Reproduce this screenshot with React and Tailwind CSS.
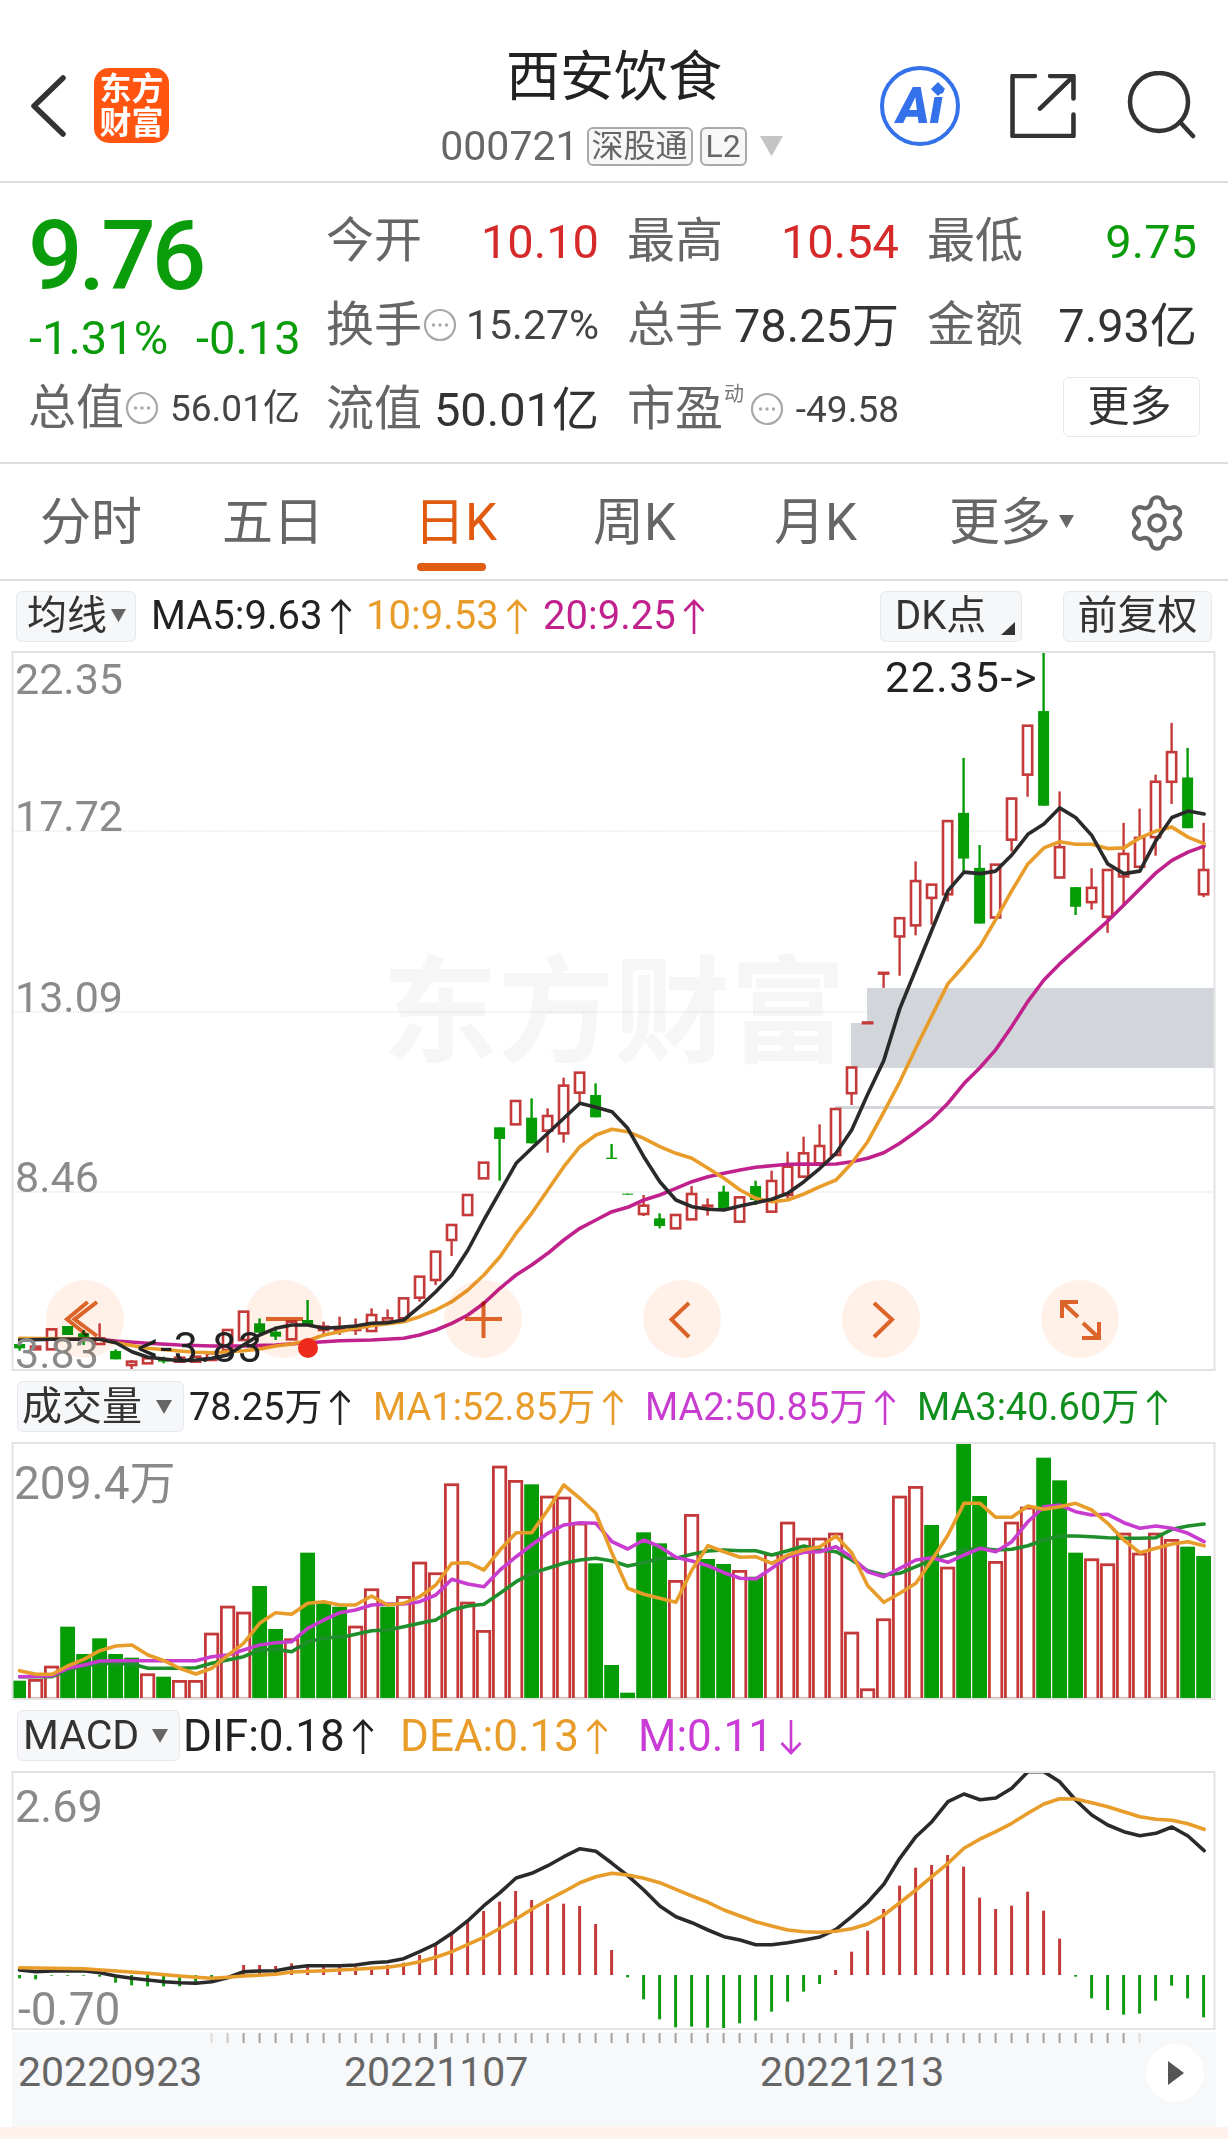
import React from 'react';
import { Settings } from 'lucide-react';

const RED = '#c43a3a';
const GREEN = '#069c06';
const BLACK = '#2a2a2a';
const ORANGE = '#e89c2a';
const MAGENTA = '#c0218c';
const VIOLET = '#c83cd0';
const DEEP_GREEN = '#1f8f2b';

const X = (i) => 19.6 + 16 * i;
// points were read off zoomed crops: x0/y0 is the crop origin, sy the vertical zoom
const seg = (x0, y0, sy, pts) => pts.map(([x, y]) => [x0 + x / 2.554, y0 + y / sy]);
const toPoints = (pts) => pts.map(([x, y]) => `${x.toFixed(1)},${y.toFixed(1)}`).join(' ');

// [i, colour, top, bottom, high, low]
const candleRows = (y0, sy, rows) =>
  rows.map(([i, c, t, b, h = t, l = b]) => ({ i, c, t: y0 + t / sy, b: y0 + b / sy, h: y0 + h / sy, l: y0 + l / sy }));

const candles = [
  ...candleRows(1020, 3, [
    [0, 'g', 972, 985, 965, 992], [1, 'r', 980, 988], [2, 'r', 928, 988], [3, 'g', 918, 945], [4, 'g', 940, 955, 930, 975],
    [5, 'r', 955, 972, 910, 975], [6, 'g', 993, 1018, 988], [7, 'r', 1025, 1035, 1020, 1052], [8, 'r', 1015, 1030], [9, 'g', 1015, 1025, 1010, 1030],
    [10, 'r', 1013, 1025], [11, 'r', 1010, 1025], [12, 'r', 1000, 1020], [13, 'r', 930, 990], [14, 'r', 875, 960],
    [15, 'g', 910, 938, 895], [16, 'g', 935, 950, 920, 960], [17, 'r', 905, 958], [18, 'g', 900, 915, 840], [19, 'r', 920, 930, 905, 950],
    [20, 'r', 925, 931, 890, 945], [21, 'r', 925, 930, 895, 945], [22, 'r', 885, 933, 865], [23, 'r', 895, 905, 868], [24, 'r', 835, 895],
    [25, 'r', 770, 833, 770, 845], [26, 'r', 695, 780, 695, 795], [27, 'r', 615, 660, 615, 708], [28, 'r', 525, 585], [29, 'r', 428, 475],
    [30, 'g', 322, 357, 322, 482], [31, 'r', 243, 313], [32, 'g', 293, 370, 235], [33, 'r', 288, 332, 265, 398], [34, 'r', 197, 340, 173, 368],
    [35, 'r', 158, 218, 158, 250], [36, 'g', 225, 292, 190], [37, 'g', 413, 417, 372],
  ]),
  ...candleRows(1120, 3, [
    [38, 'g', 221, 224], [39, 'r', 257, 282, 225, 288], [40, 'g', 295, 318, 280, 325], [41, 'r', 285, 325], [42, 'r', 222, 298, 198],
    [43, 'r', 257, 259, 235, 287], [44, 'g', 215, 268, 197], [45, 'r', 232, 305], [46, 'g', 198, 240, 182, 255], [47, 'r', 183, 275, 152],
    [48, 'r', 140, 225, 95, 235], [49, 'r', 100, 170, 50], [50, 'r', 78, 130, 13], [51, 'r', -33, 105],
  ]),
  ...candleRows(580, 2.8, [
    [52, 'r', 1365, 1437, 1365, 1470], [53, 'r', 1239, 1241], [54, 'r', 1100, 1102, 1100, 1142], [55, 'r', 947, 998, 947, 1108],
    [56, 'r', 843, 967, 788, 995], [57, 'r', 853, 890, 853, 965], [58, 'r', 675, 880, 675, 900], [59, 'g', 652, 780, 498, 820],
    [60, 'g', 806, 962, 742], [61, 'r', 797, 945], [62, 'r', 612, 727, 612, 760], [63, 'r', 408, 545, 408, 607], [64, 'g', 367, 632, 198],
    [65, 'r', 748, 833, 592], [66, 'g', 860, 915, 860, 938], [67, 'r', 862, 902, 807, 923], [68, 'r', 812, 943, 812, 988], [69, 'r', 767, 830, 680, 908],
    [70, 'r', 722, 803, 640], [71, 'r', 565, 720, 545, 772], [72, 'r', 482, 565, 400, 627], [73, 'g', 553, 695, 470], [74, 'r', 812, 880, 680, 888],
  ]),
];

const ma5 = [
  ...seg(0, 1020, 3, [[50, 960], [133, 958], [255, 958], [296, 968], [337, 995], [378, 1012], [459, 1022], [500, 1020], [541, 1015], [581, 1005], [622, 975], [663, 945], [704, 925], [745, 915], [786, 915], [827, 925], [868, 922], [908, 918], [949, 910], [990, 908], [1031, 900], [1072, 860], [1113, 815], [1154, 765], [1195, 690], [1236, 600], [1277, 515], [1318, 430], [1358, 385], [1399, 340], [1440, 295], [1481, 250], [1522, 262], [1563, 275]]),
  ...seg(614, 1120, 3, [[35, 25], [76, 110], [117, 185], [158, 240], [199, 260], [240, 268], [281, 270], [322, 258], [362, 248], [403, 238], [444, 220], [485, 185], [526, 145], [567, 100], [607, 30]]),
  ...seg(614, 580, 2.8, [[648, 1440], [689, 1345], [730, 1200], [771, 1090], [812, 980], [853, 870], [894, 818], [935, 822], [975, 815], [1016, 770], [1057, 712], [1098, 683], [1138, 638], [1179, 665], [1220, 715], [1261, 795], [1302, 822], [1343, 815], [1384, 730], [1425, 665], [1466, 647], [1507, 655]]),
];
const ma10 = [
  ...seg(0, 1020, 3, [[50, 955], [255, 958], [296, 968], [378, 985], [459, 993], [500, 997], [541, 998], [622, 992], [663, 987], [704, 978], [745, 972], [786, 962], [827, 945], [868, 935], [908, 925], [949, 917], [1031, 905], [1072, 890], [1113, 870], [1154, 845], [1195, 810], [1236, 765], [1277, 710], [1318, 640], [1358, 580], [1399, 510], [1440, 440], [1481, 380], [1522, 345], [1563, 328]]),
  ...seg(614, 1120, 3, [[35, 35], [76, 55], [117, 80], [158, 100], [199, 115], [240, 145], [281, 175], [322, 210], [362, 235], [403, 245], [444, 240], [485, 222], [526, 200], [567, 180], [607, 130], [648, 65]]),
  ...seg(614, 580, 2.8, [[689, 1490], [730, 1405], [771, 1310], [812, 1220], [853, 1130], [894, 1080], [935, 1025], [975, 950], [1016, 870], [1057, 795], [1098, 750], [1138, 733], [1179, 740], [1220, 740], [1261, 752], [1302, 750], [1343, 722], [1384, 703], [1425, 692], [1466, 720], [1507, 738]]),
];
const ma20 = [
  ...seg(0, 1020, 3, [[50, 957], [255, 958], [296, 963], [378, 970], [459, 975], [541, 978], [622, 978], [704, 975], [786, 968], [868, 962], [949, 960], [1031, 955], [1072, 945], [1113, 930], [1154, 910], [1195, 885], [1236, 850], [1277, 805], [1318, 765], [1358, 735], [1399, 700], [1440, 660], [1481, 625], [1522, 600], [1563, 575]]),
  ...seg(614, 1120, 3, [[35, 262], [76, 240], [117, 225], [158, 205], [199, 185], [240, 170], [281, 160], [322, 150], [362, 142], [403, 137], [444, 133], [485, 132], [526, 133], [567, 132], [607, 125], [648, 115], [689, 98], [730, 70], [771, 35]]),
  ...seg(614, 580, 2.8, [[812, 1510], [853, 1465], [894, 1410], [935, 1365], [975, 1315], [1016, 1250], [1057, 1180], [1098, 1120], [1138, 1075], [1179, 1035], [1220, 995], [1261, 955], [1302, 910], [1343, 865], [1384, 820], [1425, 785], [1466, 762], [1507, 745]]),
];

const volColors = 'grrgggggrgrrrrrggrgggrrgrrrrrrrrgrrrgg' + 'gggrrggrgrrrrrrrrrrgrggrrrgggrrrrrrgg';
const volTops = [
  ...[1322, 1317, 1277, 1160, 1242, 1195, 1242, 1253, 1300, 1310, 1320, 1320, 1178, 1097, 1115, 1038, 1167, 1195, 938, 1085, 1100, 1157, 1045, 1100, 1068, 965, 997, 730, 1085, 1170, 677, 720, 733, 767, 770, 848, 970, 1275].map((z) => 1240 + z / 3),
  ...[878, 397, 430, 540, 342, 477, 492, 510, 530, 460, 365, 413, 413, 398, 695, 865, 655, 287, 258, 375, 500, 127, 288, 483, 365, 320, 173, 241, 458, 475, 490, 398, 458, 398, 417, 440, 468].map((z) => 1400 + z / 3),
];

const volMa1 = [
  ...seg(0, 1240, 3, [[50, 1292], [92, 1303], [133, 1303], [173, 1278], [214, 1258], [255, 1232], [296, 1218], [337, 1215], [378, 1245], [419, 1262], [459, 1285], [500, 1302], [541, 1285], [581, 1247], [622, 1210], [663, 1150], [704, 1118], [745, 1123], [786, 1090], [827, 1085], [868, 1095], [908, 1095], [949, 1068], [990, 1095], [1031, 1090], [1072, 1070], [1113, 1035], [1154, 970], [1195, 968], [1236, 990], [1277, 930], [1318, 878], [1358, 878], [1399, 810], [1440, 735], [1481, 775], [1522, 820]]),
  ...seg(614, 1400, 3, [[-5, 460], [35, 565], [76, 583], [117, 595], [158, 607], [199, 510], [240, 437], [281, 455], [322, 472], [362, 470], [403, 490], [444, 465], [485, 450], [526, 440], [567, 408], [607, 458], [648, 557], [689, 607], [730, 580], [771, 550], [812, 480], [853, 405], [894, 310], [935, 310], [975, 352], [1016, 352], [1057, 318], [1098, 328], [1138, 320], [1179, 310], [1220, 330], [1261, 370], [1302, 420], [1343, 458], [1384, 445], [1425, 432], [1466, 425], [1507, 437]]),
];
const volMa2 = [
  ...seg(0, 1240, 3, [[50, 1310], [133, 1307], [173, 1285], [214, 1275], [255, 1263], [296, 1262], [500, 1262], [541, 1250], [581, 1245], [622, 1230], [663, 1215], [704, 1208], [745, 1205], [786, 1165], [827, 1140], [868, 1118], [908, 1110], [949, 1095], [990, 1092], [1031, 1092], [1072, 1085], [1113, 1065], [1154, 1018], [1195, 1032], [1236, 1040], [1277, 990], [1318, 950], [1358, 915], [1399, 880], [1440, 855], [1481, 848], [1522, 850]]),
  ...seg(614, 1400, 3, [[-5, 425], [35, 447], [76, 420], [117, 440], [158, 472], [199, 483], [240, 497], [281, 518], [322, 535], [362, 537], [403, 505], [444, 470], [485, 457], [526, 455], [567, 440], [607, 472], [648, 515], [689, 530], [730, 505], [771, 480], [812, 473], [853, 487], [894, 465], [935, 445], [975, 455], [1016, 425], [1057, 365], [1098, 320], [1138, 315], [1179, 335], [1220, 345], [1261, 343], [1302, 368], [1343, 385], [1384, 378], [1425, 385], [1466, 400], [1507, 425]]),
];
const volMa3 = [
  ...seg(0, 1240, 3, [[50, 1310], [133, 1310], [173, 1290], [214, 1278], [255, 1270], [337, 1272], [378, 1285], [459, 1285], [500, 1283], [541, 1270], [581, 1260], [622, 1250], [663, 1230], [704, 1228], [745, 1235], [786, 1205], [827, 1195], [888, 1188], [949, 1172], [990, 1170], [1031, 1160], [1072, 1150], [1113, 1140], [1154, 1110], [1195, 1098], [1236, 1093], [1277, 1060], [1318, 1025], [1358, 1000], [1399, 985], [1440, 970], [1481, 960], [1522, 955]]),
  ...seg(614, 1400, 3, [[-5, 483], [35, 498], [76, 488], [117, 475], [158, 475], [199, 463], [240, 453], [281, 450], [322, 452], [362, 452], [403, 465], [444, 452], [485, 438], [526, 450], [567, 455], [607, 480], [648, 512], [689, 525], [730, 520], [771, 500], [812, 480], [853, 465], [894, 450], [935, 445], [975, 450], [1016, 448], [1057, 437], [1098, 420], [1138, 408], [1179, 408], [1220, 410], [1261, 413], [1302, 415], [1343, 415], [1384, 413], [1425, 388], [1466, 378], [1507, 372]]),
];

// end of each MACD bar, zero line at 825 in crop coordinates
const macdEnds = [835, 838, 827, 827, 827, 830, 848, 856, 859, 859, 859, 855, 845, 825, 795, 795, 798, 790, 793, 795, 798, 800, 800, 795, 788, 765, 733, 703, 665, 633, 605, 573, 600, 611, 611, 618, 672, 750, 832, 898, 958, 982, 980, 983, 985, 970, 962, 935, 905, 875, 852, 810, 755, 692, 627, 557, 503, 495, 465, 500, 593, 627, 617, 575, 632, 716, 830, 895, 930, 944, 941, 902, 857, 895, 952];

const dif = [
  ...seg(0, 1700, 3, [[50, 810], [92, 815], [133, 813], [214, 812], [255, 818], [296, 828], [337, 835], [378, 840], [419, 845], [459, 848], [500, 850], [541, 845], [581, 833], [622, 815], [663, 813], [704, 812], [745, 803], [786, 797], [868, 797], [908, 795], [949, 788], [990, 785], [1031, 776], [1072, 755], [1113, 732], [1154, 700], [1195, 662], [1236, 617], [1277, 578], [1318, 534], [1358, 520], [1399, 497], [1440, 470], [1481, 446], [1522, 454], [1563, 490]]),
  ...seg(614, 1700, 3, [[35, 527], [76, 570], [117, 618], [158, 650], [199, 668], [240, 690], [281, 710], [322, 720], [362, 734], [403, 734], [444, 728], [485, 720], [526, 711], [567, 688], [607, 650], [648, 607], [689, 553], [730, 475], [771, 410], [812, 365], [853, 305], [894, 282], [935, 299], [975, 294], [1016, 265], [1057, 215], [1098, 215], [1138, 245], [1179, 300], [1220, 345], [1261, 375], [1302, 395], [1343, 407], [1384, 400], [1425, 381], [1466, 408], [1507, 452]]),
];
const dea = [
  ...seg(0, 1700, 3, [[50, 803], [133, 805], [214, 806], [296, 813], [378, 820], [459, 828], [500, 832], [541, 835], [581, 832], [622, 828], [704, 823], [745, 816], [827, 812], [908, 808], [990, 802], [1031, 795], [1072, 785], [1113, 772], [1154, 755], [1195, 733], [1236, 712], [1277, 685], [1318, 657], [1358, 628], [1399, 600], [1440, 575], [1481, 548], [1522, 530], [1563, 520]]),
  ...seg(614, 1700, 3, [[35, 525], [76, 535], [117, 548], [158, 568], [199, 588], [240, 607], [281, 630], [322, 648], [362, 665], [403, 678], [444, 690], [485, 695], [526, 697], [567, 694], [607, 686], [648, 672], [689, 645], [730, 608], [771, 570], [812, 530], [853, 490], [894, 445], [935, 417], [975, 395], [1016, 370], [1057, 340], [1098, 312], [1138, 296], [1179, 297], [1220, 308], [1261, 320], [1302, 335], [1343, 350], [1384, 358], [1425, 361], [1466, 371], [1507, 388]]),
];

const Line = ({ pts, color, width = 3.6 }) => (
  <polyline points={toPoints(pts)} fill="none" stroke={color} strokeWidth={width} strokeLinejoin="round" strokeLinecap="round" />
);

const Frame = ({ y, h }) => <rect x="12.5" y={y + 1} width="1202" height={h - 2} fill="none" stroke="#e3e3e3" strokeWidth="2" />;

function CandleChart() {
  return (
    <svg width="1228" height="720" viewBox="0 651 1228 720" className="relative block">
      {[831, 1012, 1192].map((y) => (
        <line key={y} x1="13" x2="1214" y1={y} y2={y} stroke="#cfcfcf" strokeDasharray="1 1.5" />
      ))}
      <rect x="867" y="988" width="347" height="80" fill="#d2d5da" />
      <rect x="851" y="1023" width="16" height="45" fill="#d2d5da" />
      <rect x="835" y="1106" width="379" height="3" fill="#d2d5da" />
      {candles.map(({ i, c, t, b, h, l }) => {
        const col = c === 'g' ? GREEN : RED;
        return (
          <g key={i}>
            <line x1={X(i)} x2={X(i)} y1={h} y2={l} stroke={col} strokeWidth="2.4" />
            {c === 'g' ? (
              <rect x={X(i) - 5.5} y={t} width="11" height={b - t} fill={col} />
            ) : (
              <rect x={X(i) - 4.6} y={t} width="9.2" height={b - t} fill="#fff" stroke={col} strokeWidth="2.6" />
            )}
          </g>
        );
      })}
      <Line pts={ma20} color={MAGENTA} />
      <Line pts={ma10} color={ORANGE} />
      <Line pts={ma5} color={BLACK} />
      <circle cx="308" cy="1348" r="10" fill="#ee2a1c" />
      <Frame y={651} h={720} />
    </svg>
  );
}

function VolumeChart() {
  return (
    <svg width="1228" height="258" viewBox="0 1442 1228 258" className="block">
      {volTops.map((top, i) =>
        volColors[i] === 'g' ? (
          <rect key={i} x={Math.max(X(i) - 7.4, 13)} y={top} width={i === 0 ? 13 : 14.8} height={1699 - top} fill={GREEN} />
        ) : (
          <rect key={i} x={X(i) - 6.2} y={top + 1.4} width="12.4" height={1699 - top - 1.4} fill="#fff" stroke={RED} strokeWidth="2.8" />
        )
      )}
      <Line pts={volMa3} color={DEEP_GREEN} />
      <Line pts={volMa2} color={VIOLET} />
      <Line pts={volMa1} color={ORANGE} />
      <Frame y={1442} h={258} />
    </svg>
  );
}

function MacdChart() {
  return (
    <svg width="1228" height="259" viewBox="0 1771 1228 259" className="block">
      {macdEnds.map((z, i) => (
        <line key={i} x1={X(i)} x2={X(i)} y1="1975" y2={1700 + z / 3} stroke={z > 825 ? '#119a11' : RED} strokeWidth="3" />
      ))}
      <Line pts={dif} color={BLACK} />
      <Line pts={dea} color={ORANGE} />
      <Frame y={1771} h={259} />
    </svg>
  );
}

const Tri = ({ className = '', color = '#666' }) => (
  <svg viewBox="0 0 16 14" className={className}>
    <polygon points="0,0 16,0 8,14" fill={color} />
  </svg>
);

const Arrow = ({ down = false }) => (
  <svg width="22" height="36" viewBox="0 0 22 36" className="ml-[7px] mt-[2px]" fill="none" stroke="currentColor" strokeWidth="2.6">
    {down ? <path d="M11 1 V34 M1.5 24 L11 34 L20.5 24" /> : <path d="M11 35 V2 M1.5 12 L11 2 L20.5 12" />}
  </svg>
);

const Dots = () => (
  <svg width="34" height="34" viewBox="0 0 34 34" className="shrink-0">
    <circle cx="17" cy="17" r="15" fill="none" stroke="#a8a8a8" strokeWidth="2.2" />
    <circle cx="10.5" cy="17" r="1.7" fill="#a8a8a8" />
    <circle cx="17" cy="17" r="1.7" fill="#a8a8a8" />
    <circle cx="23.5" cy="17" r="1.7" fill="#a8a8a8" />
  </svg>
);

const Pick = ({ className = '', children }) => (
  <div className={`flex h-[51px] shrink-0 items-center rounded-md border border-[#e6e8ec] bg-[#f6f7f9] leading-none text-[#333] ${className}`}>
    {children}
  </div>
);

const Ind = ({ className = '', down = false, children }) => (
  <div className={`flex shrink-0 items-center leading-none ${className}`}>
    <span>{children}</span>
    <Arrow down={down} />
  </div>
);

const AxisLabel = ({ className = '', children }) => (
  <div className={`absolute leading-none text-[#8a8a8a] ${className}`}>{children}</div>
);

const Circle = ({ children }) => (
  <div className="h-[78px] w-[78px] rounded-full bg-[#fff0e8] mix-blend-multiply">
    <svg width="78" height="78" viewBox="0 0 78 78" fill="none" stroke="#dc6428" strokeWidth="4">
      {children}
    </svg>
  </div>
);

const Cell = ({ label, value, valueClass = 'text-[47px] text-[#333]', extra = null }) => (
  <div className="flex items-center justify-between">
    <div className="flex items-center">
      <span className="text-[48px] leading-none text-[#666]">{label}</span>
      {extra}
    </div>
    <span className={`leading-none ${valueClass}`}>{value}</span>
  </div>
);

const RED_VALUE = 'text-[47px] text-[#d62a2a]';
const GREEN_VALUE = 'text-[47px] text-[#0a9c0a]';

export default function App() {
  return (
    <div className="h-[2139px] w-[1228px] overflow-hidden bg-white font-[family-name:Roboto,'Noto_Sans_CJK_SC',sans-serif]">
      {/* header */}
      <div className="grid h-[183px] grid-cols-[1fr_auto_1fr] border-b-2 border-[#dedede]">
        <div className="flex items-center pb-[2px] pl-[31px] pt-[32px]">
          <svg width="36" height="62" viewBox="0 0 36 62" fill="none" stroke="#333" strokeWidth="5.5" strokeLinecap="round" strokeLinejoin="round">
            <path d="M32 3 L3 31 L32 59" />
          </svg>
          <div className="ml-[27px] flex h-[75px] w-[75px] flex-col items-center justify-center rounded-[15px] bg-[#ff5510] text-[32px] font-bold leading-[34px] text-white">
            <span>东方</span>
            <span>财富</span>
          </div>
        </div>
        <div className="flex flex-col items-center pt-[51px]">
          <div className="text-[54px] leading-none text-[#222]">西安饮食</div>
          <div className="mt-[21px] flex items-center pr-[5px]">
            <span className="text-[41px] leading-none text-[#666]">000721</span>
            <span className="ml-[8px] rounded-[6px] border-2 border-[#aaa] bg-[#f7f7f7] px-[3px] text-[32px] leading-[35px] text-[#666]">深股通</span>
            <span className="ml-[7px] rounded-[6px] border-2 border-[#aaa] bg-[#f7f7f7] px-[4px] text-[32px] leading-[35px] text-[#666]">L2</span>
            <Tri className="ml-[13px] w-[23px]" color="#c4c4c4" />
          </div>
        </div>
        <div className="flex items-center justify-end gap-[50px] pb-[2px] pr-[32px] pt-[32px]">
          <div className="relative flex h-[80px] w-[80px] items-center justify-center rounded-full border-[4px] border-[#3372ea] text-[50px] font-black italic leading-none text-[#3372ea]">
            Ai
            <div className="absolute left-[49px] top-[14px] h-[10px] w-[10px] rotate-45 bg-[#3372ea]" />
          </div>
          <svg width="66" height="64" viewBox="0 0 64 63" fill="none" stroke="#333" strokeWidth="4.5" strokeLinecap="round" strokeLinejoin="round">
            <path d="M24 2 H2 V61 H62 V40" />
            <path d="M29 34 L62 2 M39 2 H62 V24" />
          </svg>
          <svg width="70" height="70" viewBox="0 0 70 70" fill="none" stroke="#333" strokeWidth="4.5" strokeLinecap="round">
            <circle cx="33" cy="31" r="29" />
            <path d="M54 51 L67 65" />
          </svg>
        </div>
      </div>

      {/* quote */}
      <div className="flex h-[281px] border-b-2 border-[#dedede]">
        <div className="flex w-[326px] shrink-0 flex-col pl-[28px]">
          <div className="mt-[25px] text-[96px] font-medium leading-none tracking-[-4px] text-[#0a9c0a]">9.76</div>
          <div className="ml-[1px] mt-[10px] flex gap-[28px] text-[47px] leading-none text-[#0a9c0a]">
            <span>-1.31%</span>
            <span>-0.13</span>
          </div>
          <div className="mt-[23px] flex items-center">
            <span className="text-[48px] leading-none text-[#666]">总值</span>
            <span className="ml-[1px]"><Dots /></span>
            <span className="ml-[11px] text-[37px] leading-none text-[#444]">56.01亿</span>
          </div>
        </div>
        <div className="grid grid-cols-[273px_272px_270px] grid-rows-[84px_84px_84px] gap-x-[28px] pt-[16px]">
          <Cell label="今开" value="10.10" valueClass={RED_VALUE} />
          <Cell label="最高" value="10.54" valueClass={RED_VALUE} />
          <Cell label="最低" value="9.75" valueClass={GREEN_VALUE} />
          <Cell label="换手" value="15.27%" valueClass="text-[41px] text-[#444]" extra={<span className="ml-[1px]"><Dots /></span>} />
          <Cell label="总手" value="78.25万" />
          <Cell label="金额" value="7.93亿" />
          <Cell label="流值" value="50.01亿" />
          <Cell
            label="市盈"
            value="-49.58"
            valueClass="text-[37px] text-[#444]"
            extra={
              <>
                <span className="mb-[30px] ml-[1px] text-[20px] leading-none text-[#777]">动</span>
                <span className="ml-[6px]"><Dots /></span>
              </>
            }
          />
          <div className="flex items-center justify-end">
            <div className="-mr-[3px] -mt-[4px] flex h-[60px] w-[137px] items-center justify-center rounded-md border border-[#e8e8e8] pr-[4px] text-[42px] leading-none text-[#333]">更多</div>
          </div>
        </div>
      </div>

      {/* period tabs */}
      <div className="grid h-[117px] grid-cols-[182px_192px_179px_181px_175px_177px_1fr] border-b-2 border-[#dedede] pl-[40px] pt-[33px] text-[51px] leading-none text-[#666]">
        <span>分时</span>
        <span>五日</span>
        <div className="flex flex-col items-start text-[#e05a10]">
          <span>日K</span>
          <div className="ml-[3px] mt-[15px] h-[8px] w-[69px] rounded-full bg-[#e05a10]" />
        </div>
        <span>周K</span>
        <span>月K</span>
        <div className="flex items-start">
          <span>更多</span>
          <Tri className="ml-[8px] mt-[18px] w-[15px]" color="#666" />
        </div>
        <Settings size={62} strokeWidth={1.6} className="-mt-[5px] text-[#666]" />
      </div>

      {/* MA legend */}
      <div className="flex h-[70px] items-center pl-[16px] pr-[16px]">
        <Pick className="w-[120px] pl-[10px] text-[40px]">
          均线
          <Tri className="ml-[4px] w-[15px]" />
        </Pick>
        <Ind className="ml-[15px] w-[215px] text-[40px] text-[#222]">MA5:9.63</Ind>
        <Ind className="w-[177px] text-[40px] text-[#e89c2a]">10:9.53</Ind>
        <Ind className="text-[40px] text-[#c0218c]">20:9.25</Ind>
        <Pick className="relative ml-auto w-[142px] pl-[14px] text-[40px]">
          DK点
          <svg width="14" height="13" viewBox="0 0 14 13" className="absolute bottom-[6px] right-[6px]">
            <polygon points="14,0 14,13 0,13" fill="#333" />
          </svg>
        </Pick>
        <Pick className="ml-[41px] w-[149px] justify-center text-[40px]">前复权</Pick>
      </div>

      {/* candles */}
      <div className="relative h-[720px]">
        <div className="absolute left-[382px] top-[304px] text-[116px] font-bold leading-none text-[#f6f6f6]">东方财富</div>
        <CandleChart />
        <AxisLabel className="left-[15px] top-[7px] text-[43px]">22.35</AxisLabel>
        <AxisLabel className="left-[15px] top-[144px] text-[43px]">17.72</AxisLabel>
        <AxisLabel className="left-[15px] top-[325px] text-[43px]">13.09</AxisLabel>
        <AxisLabel className="left-[15px] top-[505px] text-[43px]">8.46</AxisLabel>
        <AxisLabel className="left-[15px] top-[681px] text-[43px]">3.83</AxisLabel>
        <div className="absolute left-[885px] top-[5px] text-[43px] leading-none tracking-[1.5px] text-[#222]">22.35-&gt;</div>
        <div className="absolute left-[137px] top-[675px] text-[43px] leading-none tracking-[1.5px] text-[#222]">&lt;-3.83</div>
        <div className="absolute left-[46px] top-[629px] flex gap-[121px]">
          <Circle>
            <path d="M41.7 22 L21 39.3 L41.5 55.5 M51 22 L28.5 39.3 L51 56" />
          </Circle>
          <Circle>
            <path d="M21 39 H58" />
          </Circle>
          <Circle>
            <path d="M21 39 H58 M39.5 21.5 V58" />
          </Circle>
          <Circle>
            <path d="M46 23 L28.5 39.5 L46 57" />
          </Circle>
          <Circle>
            <path d="M32 23 L50 39.5 L32 57" />
          </Circle>
          <Circle>
            <path d="M37 22 H21 V38 M21 22 L37 37 M41 58 H58 V42 M58 58 L42 43" />
          </Circle>
        </div>
      </div>

      {/* volume legend */}
      <div className="flex h-[71px] items-center pl-[17px]">
        <Pick className="w-[167px] pl-[4px] text-[40px]">
          成交量
          <Tri className="ml-[14px] w-[16px]" />
        </Pick>
        <Ind className="ml-[5px] w-[184px] text-[38px] text-[#222]">78.25万</Ind>
        <Ind className="w-[272px] text-[38px] text-[#e89c2a]">MA1:52.85万</Ind>
        <Ind className="w-[272px] text-[38px] text-[#c83cd0]">MA2:50.85万</Ind>
        <Ind className="text-[38px] text-[#118f1e]">MA3:40.60万</Ind>
      </div>

      <div className="relative h-[258px]">
        <VolumeChart />
        <AxisLabel className="left-[14px] top-[18px] text-[46px]">209.4万</AxisLabel>
      </div>

      {/* MACD legend */}
      <div className="flex h-[71px] items-center pl-[17px]">
        <Pick className="w-[163px] pl-[5px] text-[41px]">
          MACD
          <Tri className="ml-[13px] w-[16px]" />
        </Pick>
        <Ind className="ml-[3px] w-[217px] text-[44px] text-[#222]">DIF:0.18</Ind>
        <Ind className="w-[238px] text-[44px] text-[#e89c2a]">DEA:0.13</Ind>
        <Ind down className="text-[44px] text-[#c93ad6]">M:0.11</Ind>
      </div>

      <div className="relative h-[259px]">
        <MacdChart />
        <AxisLabel className="left-[15px] top-[13px] text-[45px]">2.69</AxisLabel>
        <AxisLabel className="left-[18px] top-[215px] text-[46px]">-0.70</AxisLabel>
      </div>

      {/* date axis */}
      <div className="relative ml-[12px] mt-[2px] h-[95px] w-[1204px] bg-[#f7f8fa] pl-[6px] pt-[20px]">
        <svg width="1204" height="20" viewBox="12 2032 1204 20" className="absolute left-0 top-0">
          {Array.from({ length: 59 }, (_, n) => n + 12).map((i) => (
            <line
              key={i}
              x1={X(i)}
              x2={X(i)}
              y1="2033"
              y2={i === 26 || i === 52 ? 2049 : 2043}
              stroke={i === 12 || i === 70 ? '#dcdcdc' : i === 13 ? '#c8c8c8' : '#a0a0a0'}
              strokeWidth={i === 26 || i === 52 ? 3 : 2}
            />
          ))}
        </svg>
        <div className="grid grid-cols-[326px_416px_1fr] text-[41px] leading-none text-[#666]">
          <span>20220923</span>
          <span>20221107</span>
          <span>20221213</span>
        </div>
        <div className="absolute left-[1134px] top-[12px] flex h-[58px] w-[58px] items-center justify-center rounded-full bg-white">
          <svg width="16" height="24" viewBox="0 0 16 24" className="ml-[2px]">
            <polygon points="0,0 16,12 0,24" fill="#555" />
          </svg>
        </div>
      </div>
      <div className="h-[12px] bg-[#fff2ec]" />
    </div>
  );
}
